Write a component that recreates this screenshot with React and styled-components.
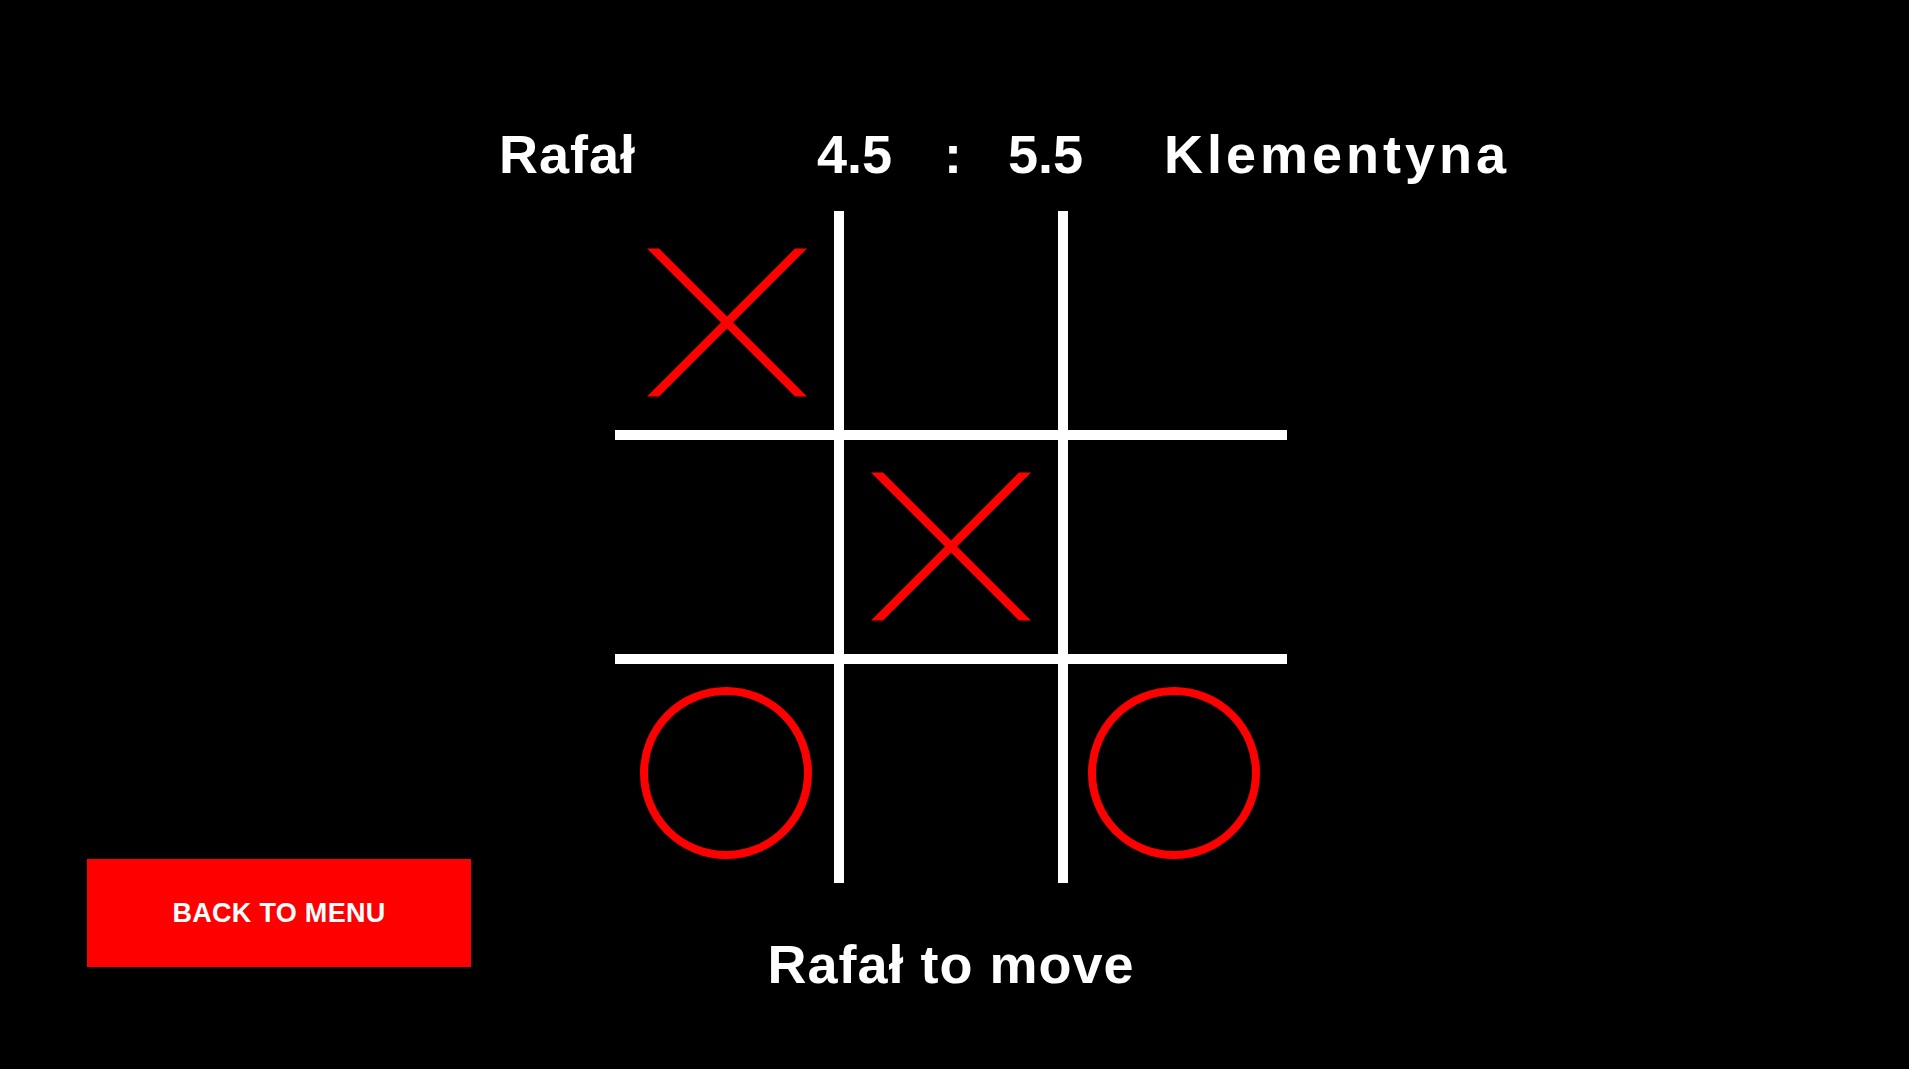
import styled, { createGlobalStyle } from "styled-components";

const GlobalStyle = createGlobalStyle`
  html, body {
    margin: 0;
    padding: 0;
    background: #000;
    overflow: hidden;
  }
  body {
    font-family: "Liberation Sans", Arial, sans-serif;
  }
`;

const Screen = styled.div`
  width: 1909px;
  height: 1069px;
  background: #000;
  color: #fff;
  padding-top: 127px;
  box-sizing: border-box;
`;

const ScoreBar = styled.div`
  display: grid;
  grid-template-columns: 318px 127px 64px 156px auto;
  padding-left: 499px;
  font-size: 54px;
  font-weight: 700;
  line-height: 54px;
`;

const Name = styled.span`
  letter-spacing: ${(p) => p.$spread || 0}px;
  white-space: nowrap;
`;

const Score = styled.span`
  white-space: nowrap;
`;

const Colon = styled.span`
  text-align: center;
  width: 18px;
`;

const Body = styled.div`
  display: grid;
  grid-template-columns: 615px 672px;
`;

const LeftPane = styled.div`
  padding-top: 678px;
  padding-left: 87px;
`;

const MenuButton = styled.button`
  width: 384px;
  height: 108px;
  border: none;
  border-radius: 0;
  background: #ff0000;
  color: #fff;
  font-family: "Liberation Sans", Arial, sans-serif;
  font-weight: 700;
  font-size: 27px;
  letter-spacing: 0.3px;
  padding: 0;
  cursor: pointer;
`;

const Center = styled.div`
  display: flex;
  flex-direction: column;
  align-items: center;
`;

const Board = styled.div`
  margin-top: 30px;
  width: 672px;
  height: 672px;
  display: grid;
  grid-template-columns: 219px 214px 219px;
  grid-template-rows: 219px 214px 219px;
  gap: 10px;
  background: #fff;
`;

const align = ["flex-start", "center", "flex-end"];

const Cell = styled.div`
  background: #000;
  display: flex;
  justify-content: ${(p) => align[p.$col]};
  align-items: ${(p) => align[p.$row]};
  overflow: visible;

  svg {
    flex-shrink: 0;
    position: relative;
    z-index: 1;
  }
`;

const Status = styled.div`
  margin-top: 54px;
  font-size: 54px;
  font-weight: 700;
  line-height: 54px;
  letter-spacing: 1px;
  white-space: nowrap;
`;

const Cross = () => (
  <svg width="224" height="224" viewBox="0 0 224 224">
    <polygon points="32,37.5 44,37.5 192,185.5 180,185.5" fill="#ff0000" />
    <polygon points="180,37.5 192,37.5 44,185.5 32,185.5" fill="#ff0000" />
  </svg>
);

const Nought = () => (
  <svg width="224" height="224" viewBox="0 0 224 224">
    <circle cx="111" cy="114" r="82" fill="none" stroke="#ff0000" strokeWidth="8" />
  </svg>
);

const board = [
  ["x", null, null],
  [null, "x", null],
  ["o", null, "o"],
];

export default function App() {
  return (
    <>
      <GlobalStyle />
      <Screen>
        <ScoreBar>
          <Name $spread={1}>Rafał</Name>
          <Score>4.5</Score>
          <Colon>:</Colon>
          <Score>5.5</Score>
          <Name $spread={4}>Klementyna</Name>
        </ScoreBar>
        <Body>
          <LeftPane>
            <MenuButton>BACK TO MENU</MenuButton>
          </LeftPane>
          <Center>
            <Board>
              {board.map((row, r) =>
                row.map((mark, c) => (
                  <Cell key={`${r}-${c}`} $row={r} $col={c}>
                    {mark === "x" && <Cross />}
                    {mark === "o" && <Nought />}
                  </Cell>
                ))
              )}
            </Board>
            <Status>Rafał to move</Status>
          </Center>
        </Body>
      </Screen>
    </>
  );
}
